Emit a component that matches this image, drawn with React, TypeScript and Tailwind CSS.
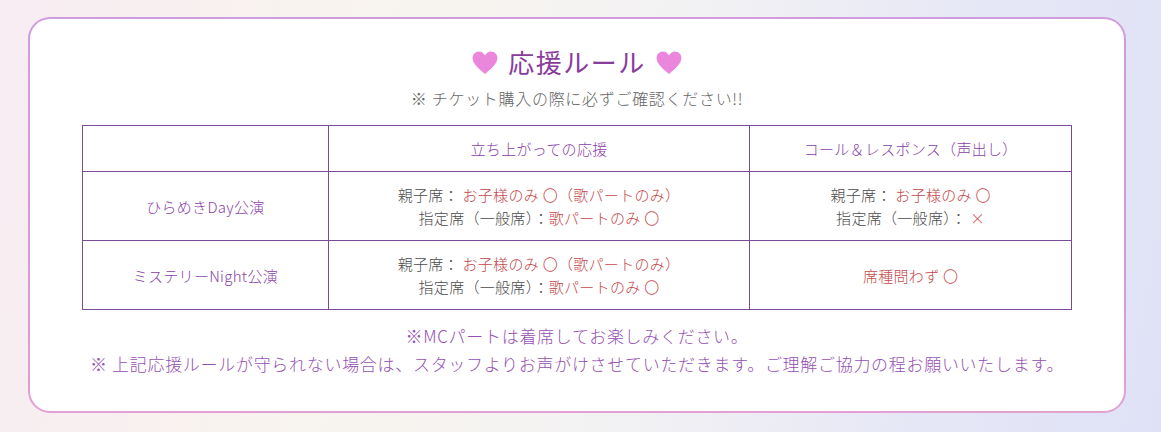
const jp = 'font-["Noto_Sans_CJK_JP","Noto_Sans",sans-serif]';

// ── Heart ─────────────────────────────────────────────────────────────────────

function Heart() {
  return (
    <svg width="26" height="23" viewBox="0 0 24 21" className="shrink-0">
      <path
        d="M12 21 C10 19 1 13 0.6 7 C0.3 3 3 0.3 6.5 0.3 C9 0.3 11 2 12 4 C13 2 15 0.3 17.5 0.3 C21 0.3 23.7 3 23.4 7 C23 13 14 19 12 21 Z"
        fill="#ea86dc"
      />
    </svg>
  );
}

// ── Table bits ────────────────────────────────────────────────────────────────

const grey = 'text-[#4a4a4a]';
const red = 'text-[#c4474a]';
const purple = 'text-[#8a3fa8]';

function Line({ label, value }: { label: string; value: string }) {
  return (
    <div>
      <span className={grey}>{label}</span>
      <span className={red}>{value}</span>
    </div>
  );
}

const rows = [
  {
    name: 'ひらめきDay公演',
    stand: [
      ['親子席： ', 'お子様のみ 〇（歌パートのみ）'],
      ['指定席（一般席）：', '歌パートのみ 〇'],
    ],
    call: [
      ['親子席： ', 'お子様のみ 〇'],
      ['指定席（一般席）： ', '×'],
    ],
  },
  {
    name: 'ミステリーNight公演',
    stand: [
      ['親子席： ', 'お子様のみ 〇（歌パートのみ）'],
      ['指定席（一般席）：', '歌パートのみ 〇'],
    ],
    call: [['', '席種問わず 〇']],
  },
];

// ── Main ──────────────────────────────────────────────────────────────────────

export default function App() {
  return (
    <div
      className={`${jp} font-light w-[1161px] h-[432px] overflow-hidden pt-[17px] pl-[28px] bg-[linear-gradient(100deg,#f7ecf2_0%,#f8f4ee_30%,#f3f2f3_55%,#e6e7f6_80%,#dfe2f6_100%)]`}
    >
      <div className="w-[1098px] h-[396px] rounded-[22px] p-[2px] bg-[linear-gradient(180deg,#cf9ddd_0%,#d49ad8_60%,#e3a0d2_100%)]">
        <div className="h-full rounded-[20px] bg-white px-[52px] pt-[25px] flex flex-col items-center">
          {/* Title */}
          <div className="flex items-center gap-[10px] h-[36px]">
            <Heart />
            <h2 className="text-[26px] leading-[36px] tracking-[1.5px] font-normal text-[#8a3c9c]">応援ルール</h2>
            <Heart />
          </div>
          <p className="mt-[6px] text-[16px] leading-[24px] tracking-[0.7px] text-[#666666]">
            ※ チケット購入の際に必ずご確認ください!!
          </p>

          {/* Table */}
          <table className="mt-[15px] w-[990px] border-collapse text-[15px] leading-[23px] tracking-[0.3px] text-center">
            <colgroup>
              <col className="w-[246px]" />
              <col className="w-[422px]" />
              <col className="w-[322px]" />
            </colgroup>
            <thead>
              <tr className="h-[46px]">
                <th className="border border-[#7d4a94] font-light"></th>
                <th className={`border border-[#7d4a94] font-light ${purple}`}>立ち上がっての応援</th>
                <th className={`border border-[#7d4a94] font-light ${purple}`}>コール＆レスポンス（声出し）</th>
              </tr>
            </thead>
            <tbody>
              {rows.map((r) => (
                <tr key={r.name} className="h-[69px]">
                  <td className={`border border-[#7d4a94] ${purple}`}>{r.name}</td>
                  <td className="border border-[#7d4a94]">
                    {r.stand.map(([l, v]) => (
                      <Line key={l} label={l} value={v} />
                    ))}
                  </td>
                  <td className="border border-[#7d4a94]">
                    {r.call.map(([l, v]) => (
                      <Line key={l + v} label={l} value={v} />
                    ))}
                  </td>
                </tr>
              ))}
            </tbody>
          </table>

          {/* Notes */}
          <div className="mt-[12px] text-[17px] leading-[28px] tracking-[0.7px] text-[#9550b2] text-center">
            <p>※MCパートは着席してお楽しみください。</p>
            <p>※ 上記応援ルールが守られない場合は、スタッフよりお声がけさせていただきます。ご理解ご協力の程お願いいたします。</p>
          </div>
        </div>
      </div>
    </div>
  );
}
